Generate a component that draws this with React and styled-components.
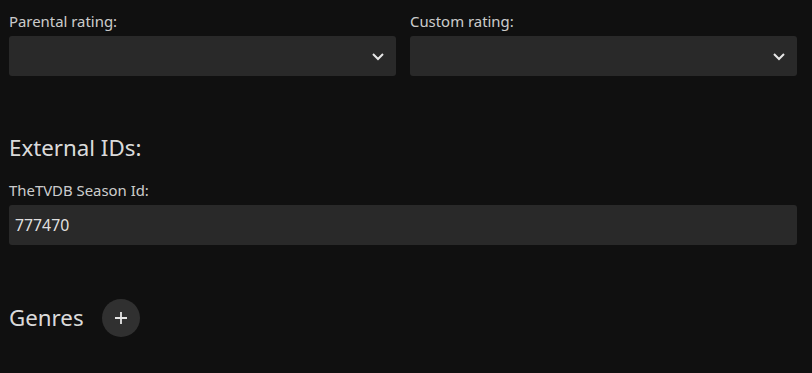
import React from "react";
import styled, { createGlobalStyle } from "styled-components";

const Global = createGlobalStyle`
  html, body { margin: 0; padding: 0; background: #101010; }
  body { font-family: "Noto Sans", sans-serif; color: rgba(255,255,255,0.87); }
`;

const Page = styled.div`
  width: 812px;
  height: 373px;
  box-sizing: border-box;
  padding: 11px 15px 0 9px;
  overflow: hidden;
`;

const Row = styled.div`
  display: grid;
  grid-template-columns: 1fr 1fr;
  column-gap: 14px;
`;

const Field = styled.div`
  display: flex;
  flex-direction: column;
  margin-top: ${(p) => p.$mt || 0}px;
`;

const Label = styled.label`
  font-size: 14.9px;
  line-height: 20px;
  color: rgba(255,255,255,0.8);
  margin-bottom: 5px;
`;

const SelectBox = styled.div`
  position: relative;
  height: 40px;
  background: #292929;
  border-radius: 3px;
`;

const Chevron = styled.svg`
  position: absolute;
  right: 11px;
  top: 15px;
`;

const Heading = styled.h2`
  margin: ${(p) => p.$mt}px 0 0 0;
  font-size: 22.3px;
  font-weight: 400;
  line-height: 28px;
  color: rgba(255,255,255,0.87);
`;

const Input = styled.div`
  height: 40px;
  background: #292929;
  border-radius: 3px;
  display: flex;
  align-items: center;
  padding: 0 6px;
  font-size: 15.8px;
  color: rgba(255,255,255,0.87);
`;

const GenreRow = styled.div`
  display: flex;
  align-items: center;
  gap: 18px;
  margin-top: 54px;
`;

const RoundBtn = styled.div`
  width: 38px;
  height: 38px;
  border-radius: 50%;
  background: #303030;
  display: flex;
  align-items: center;
  justify-content: center;
`;

const Select = ({ label }) => (
  <Field>
    <Label>{label}</Label>
    <SelectBox>
      <Chevron width="14" height="10" viewBox="0 0 14 10">
        <path d="M2 3 L7 8 L12 3" fill="none" stroke="#e6e6e6" strokeWidth="2" />
      </Chevron>
    </SelectBox>
  </Field>
);

export default function App() {
  return (
    <>
      <Global />
      <Page>
        <Row>
          <Select label="Parental rating:" />
          <Select label="Custom rating:" />
        </Row>
        <Heading $mt={58}>External IDs:</Heading>
        <Field $mt={18}>
          <Label>TheTVDB Season Id:</Label>
          <Input>777470</Input>
        </Field>
        <GenreRow>
          <Heading $mt={0}>Genres</Heading>
          <RoundBtn>
            <svg width="14" height="14" viewBox="0 0 14 14">
              <path d="M7 1 V13 M1 7 H13" stroke="#e6e6e6" strokeWidth="1.8" />
            </svg>
          </RoundBtn>
        </GenreRow>
      </Page>
    </>
  );
}
